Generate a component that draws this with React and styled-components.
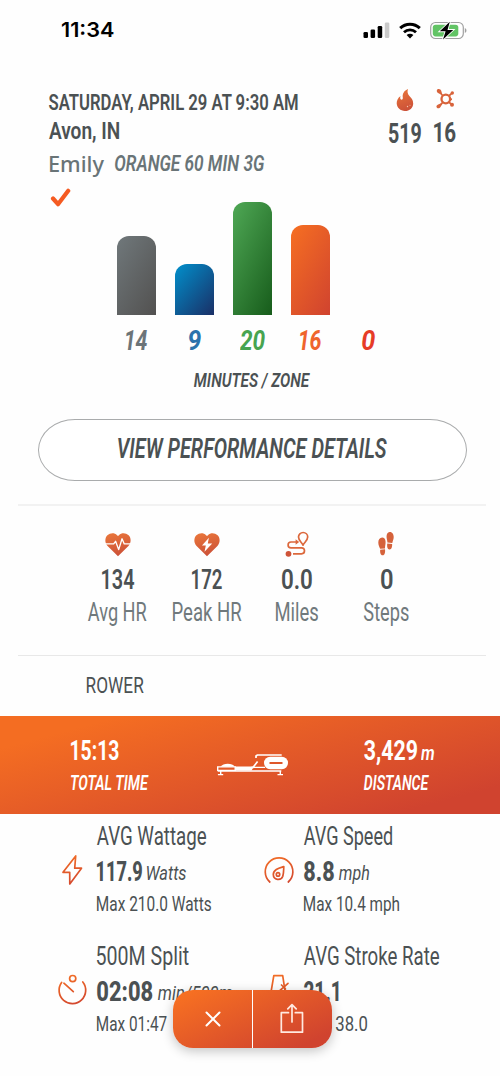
import React, { useLayoutEffect, useRef } from 'react';
import styled, { createGlobalStyle } from 'styled-components';

const GlobalStyle = createGlobalStyle`
  * {
    box-sizing: border-box;
  }

  body {
    margin: 0;
    background: #fefefe;
    font-family: Roboto, 'Liberation Sans', sans-serif;
    color: #4b5153;
  }
`;

// Condensed label: squeezes the text so that its ink fills the given width
const Condensed = ({ width, children, ...rest }) => {
  const ref = useRef(null);

  useLayoutEffect(() => {
    const el = ref.current;
    const css = getComputedStyle(el);
    const ctx = document.createElement('canvas').getContext('2d');
    // measured at 10x, the ink box is rounded to whole pixels
    ctx.font = `${css.fontStyle} ${css.fontWeight} ${parseFloat(css.fontSize) * 10}px ${css.fontFamily}`;
    const m = ctx.measureText(el.textContent);
    const left = m.actualBoundingBoxLeft / 10;
    const right = m.actualBoundingBoxRight / 10;
    // the laid out advance can differ a little from the ideal one
    const advance = el.offsetWidth ? el.getBoundingClientRect().width : 0;
    const fix = el.style.transform || !advance ? 1 : advance / (m.width / 10);
    const scale = width / ((left + right) * fix);
    el.style.transform = `translateX(${left * scale}px) scaleX(${scale})`;
  }, [width, children]);

  return (
    <Label $width={width} {...rest}>
      <span ref={ref}>{children}</span>
    </Label>
  );
};

const Label = styled.div`
  flex: none;
  width: ${(p) => p.$width}px;
  height: ${(p) => p.$line || 30}px;
  line-height: ${(p) => p.$line || 30}px;
  font-family: ${(p) => p.$font || 'inherit'};
  font-size: ${(p) => p.$size}px;
  font-weight: ${(p) => p.$weight || 400};
  font-style: ${(p) => (p.$italic ? 'italic' : 'normal')};
  color: ${(p) => p.$color || 'inherit'};
  white-space: nowrap;

  span {
    display: inline-block;
    transform-origin: 0 50%;
  }
`;

const Screen = styled.div`
  position: relative;
  width: 500px;
  height: 1076px;
  overflow: hidden;
  background: #fefefe;
`;

const StatusBar = styled.div`
  display: flex;
  align-items: center;
  justify-content: space-between;
  height: 60px;
  padding: 0 33px 0 61.5px;
  font-family: Inter, sans-serif;
  color: #000;

  svg {
    display: block;
  }
`;

const StatusIcons = styled.div`
  display: flex;
  align-items: center;
  gap: 9px;
`;

const Header = styled.div`
  display: flex;
  justify-content: space-between;
  height: 142px;
  padding: 28px 44.5px 0 49px;
`;

const CoachLine = styled.div`
  display: flex;
  gap: 11px;
  padding-left: 1px;
`;

const CheckIcon = styled.svg`
  display: block;
  margin: 7px 0 0 1px;
`;

const Totals = styled.div`
  display: flex;
  gap: 13px;
`;

const Total = styled.div`
  display: flex;
  flex-direction: column;
  align-items: center;

  svg {
    display: block;
    height: 24px;
    margin-bottom: ${(p) => p.$gap}px;
  }
`;

const Zones = styled.div`
  display: grid;
  grid-template-columns: repeat(5, 39px);
  column-gap: 19px;
  justify-items: center;
  align-items: end;
  padding-left: 117px;
`;

const Bar = styled.div`
  width: 39px;
  border-radius: 12px 12px 0 0;
  background: linear-gradient(${(p) => p.$angle}deg, ${(p) => p.$from}, ${(p) => p.$to});
`;

const BarSlot = styled.div`
  display: flex;
  align-items: flex-end;
  height: 113px;
`;

const ZoneCaption = styled.div`
  display: flex;
  padding-left: 194px;
`;

const DetailsButton = styled.button`
  display: flex;
  align-items: center;
  justify-content: center;
  width: 429px;
  height: 62px;
  margin: 26px 0 23px 38px;
  padding: 0 0 2px;
  border: 1px solid #a9abac;
  border-radius: 37px / 31px;
  background: #fff;
  font-family: inherit;
  color: inherit;
`;

const Divider = styled.div`
  height: ${(p) => p.$thick}px;
  margin: 0 14px 0 18px;
  background: ${(p) => p.$tone};
`;

const Stats = styled.div`
  display: grid;
  grid-template-columns: repeat(4, 89.6px);
  height: 149px;
  padding: 25px 0 0 72.8px;
`;

const Stat = styled.div`
  display: flex;
  flex-direction: column;
  align-items: center;

  svg {
    display: block;
    height: 27px;
  }
`;

const SectionTitle = styled.div`
  height: 60px;
  padding-left: 87px;
`;

const Banner = styled.div`
  display: flex;
  height: 98px;
  padding: 20px 66px 0 71px;
  background: linear-gradient(165deg, #f46d22 14%, #d0432f 88%);
  color: #fff;
  justify-content: space-between;

  svg {
    display: block;
    margin-top: 17.5px;
    margin-left: -7px;
  }
`;

const ValueRow = styled.div`
  display: flex;
  height: ${(p) => p.$height}px;
  gap: ${(p) => p.$gap || 4}px;
`;

const Metrics = styled.div`
  display: grid;
  grid-template-columns: repeat(2, 206.5px);
  grid-auto-rows: 119.5px;
  padding: 6px 0 0 57px;
`;

const Metric = styled.div`
  display: flex;
  gap: 10px;
`;

const MetricIcon = styled.div`
  width: 30px;
  padding-top: 34px;

  svg {
    display: block;
  }
`;

const Dock = styled.div`
  position: absolute;
  left: 173px;
  top: 989.5px;
  display: grid;
  grid-template-columns: 79px 79.5px;
  width: 158.5px;
  height: 58px;
  border-radius: 20px;
  background: linear-gradient(155deg, #f66f22 8%, #d0432f 88%);
  box-shadow: 0 3px 12px rgba(0, 0, 0, 0.24);
`;

const DockButton = styled.button`
  display: flex;
  align-items: center;
  justify-content: center;
  padding: 0;
  border: none;
  background: none;

  & + & {
    border-left: 1px solid #fff;
  }
`;

const Defs = () => (
  <svg width="0" height="0" style={{ position: 'absolute' }}>
    <defs>
      <linearGradient id="ember" x1="0.3" y1="0" x2="0.6" y2="1">
        <stop offset="0" stopColor="#e8743a" />
        <stop offset="1" stopColor="#cb5038" />
      </linearGradient>
      <linearGradient id="line" gradientUnits="userSpaceOnUse" x1="8" y1="0" x2="20" y2="32">
        <stop offset="0" stopColor="#f47025" />
        <stop offset="1" stopColor="#d1452f" />
      </linearGradient>
    </defs>
  </svg>
);

const Flame = () => (
  <svg width="18" height="24" viewBox="0 0 18 24">
    <path
      fill="url(#ember)"
      d="M12 .9C8.2 2.4 6.2 5.6 6.8 9.4c.3 2-1.4 3-2.3 1.6C4 10.2 4.2 9 4.6 8 1.8 9.8.6 12.7.7 15.6 1 20 4.4 23 8.9 23c4.8 0 8.3-3.3 8.3-7.6 0-3.6-2-5.4-3.8-7.4C11.700 6 11 3.600 12 .9Z"
    />
    <circle cx="11.5" cy="18.5" r=".7" fill="#f5c6ad" />
    <circle cx="14" cy="17.2" r=".5" fill="#f5c6ad" />
  </svg>
);

const Splat = () => (
  <svg width="20" height="24" viewBox="0 0 20 24">
    <g fill="none" stroke="#d8633b">
      <circle cx="10.8" cy="11" r="4.3" strokeWidth="2.3" />
      <path d="M5 4.5 8 8M13.800 8l2.600-2.400M8 14l-3.300 3.800M13.800 14l2.400 2.200M15 11.100l2 .2" strokeWidth="1.8" />
    </g>
    <g fill="#d8633b">
      <path d="M2.500 1.300C4 .5 5.900 1.300 6.400 3.200l.8 3.600L4 5.500C1.700 4.800 1.100 2.300 2.500 1.300Z" />
      <path d="M1.800 17.600c.8-1.200 3.900-2.200 5.600-2.400l-1.800 3.500c-.8 1.600-2.700 2-3.700 1-.6-.6-.6-1.400-.1-2.100Z" />
      <circle cx="17.300" cy="5" r="1.700" />
      <circle cx="17" cy="16.800" r="2" />
    </g>
  </svg>
);

const HEART =
  'M14 26.2 3.2 15.5C.1 12.4.2 7.2 3 4.5 6 1.7 10.4 1.7 13 4.3l1 1 1-1c2.6-2.6 7-2.6 10 .2 2.8 2.7 2.9 7.9-.2 11Z';

const HeartPulse = () => (
  <svg width="28" height="27" viewBox="0 0 28 28">
    <path fill="url(#ember)" d={HEART} />
    <path
      d="M1 13.4h8.5l2-2.7 3.2 8.6 3.5-11.2 2.3 5.3H27"
      fill="none"
      stroke="#fff"
      strokeWidth="1.4"
      strokeLinejoin="round"
    />
  </svg>
);

const HeartBolt = () => (
  <svg width="28" height="27" viewBox="0 0 28 28">
    <path fill="url(#ember)" d={HEART} />
    <path d="M16 7 8.8 15h4l-1.4 6.5 8-8.6h-4.6Z" fill="#fff" />
  </svg>
);

const Route = () => (
  <svg width="26" height="27" viewBox="0 0 26 27">
    <g fill="none" stroke="#dc683c" strokeWidth="1.7">
      <path d="M19 14.2c-1-2.700-4.500-4.600-4.500-8.100a4.600 4.600 0 0 1 9.200 0c0 3.500-3.700 5.400-4.700 8.100Z" strokeLinejoin="round" />
      <path d="M12 11H7a2.900 2.900 0 0 0 0 5.800h10.500a2.900 2.900 0 0 1 0 6H9" />
    </g>
    <path d="M11.600 8.200 15.200 11l-3.600 2.800Z" fill="#dc683c" />
    <circle cx="4.500" cy="22.800" r="2.900" fill="#cf5338" />
  </svg>
);

const Footprints = () => (
  <svg width="20" height="27" viewBox="0 0 20 27">
    <g fill="#d5623b">
      <path d="M6.300 6.500c2.800.1 3.700 3.200 3.200 6.300-.2 1.500-.5 2.700-.5 4.600l-4.900.4C3.300 15.800 2.300 14 2.300 11.600c0-2.900 1.500-5.200 4-5.100Z" />
      <path d="m4.200 18.700 4.800-.5c.4 2.900-.2 6-2.300 6.100-2.100.1-2.800-2.900-2.500-5.600Z" />
      <path d="M13.600 1.100c2.600-.3 4.100 2.300 4.100 5 0 2.300-1 4-1.400 6l-4.900-.6c0-1.700-.5-2.800-.7-4.300-.4-2.900.3-5.800 2.900-6.100Z" />
      <path d="m11.300 12.400 4.800.6c.3 2.700-.6 5.600-2.600 5.400-2.200-.2-2.700-3.100-2.200-6Z" />
    </g>
  </svg>
);

const Rower = () => (
  <svg width="72" height="22" viewBox="0 0 72 22">
    <path d="M3.500 12.800c2.500-4.200 12-4.200 14.500 0Z" fill="#fff" />
    <path d="M18 12.500h19l-2.500 4H18Z" fill="#fff" />
    <g fill="none" stroke="#fff" strokeWidth="1.400">
      <path d="M.7 12.900h17.500v3.500H.7ZM34 13.400h14M.7 17h63.600" />
      <path d="M35.500 14 40.600 7.500M39 4V2l1.300-1H64.700" strokeWidth="1.700" />
      <path d="M3.700 17v3.500M.9 20.600h5.300M63.300 17v3.500M60.500 20.600h5.500" />
    </g>
    <rect x="47" y="2.800" width="24" height="12.400" rx="6.200" fill="#fff" />
    <path d="M52.500 9h13" stroke="#df572a" strokeWidth="2" />
  </svg>
);

const Bolt = () => (
  <svg width="30" height="34" viewBox="0 0 30 34">
    <path
      d="M18.700 1.900 6 18.300h6.700L12.800 30 24.500 14.200h-6.800Z"
      fill="none"
      stroke="url(#line)"
      strokeWidth="1.700"
      strokeLinejoin="round"
    />
  </svg>
);

const Gauge = () => (
  <svg width="30" height="34" viewBox="0 0 30 34">
    <g fill="none" stroke="url(#line)" strokeWidth="1.700" strokeLinecap="round">
      <path d="M5.800 28A13.800 13.800 0 1 1 24.300 28" />
      <path d="M19.800 12.600c-5 1.600-10.500 3-10.500 8a4.900 4.900 0 0 0 9.500 1.600c1-3 .8-6.300 1-9.600Z" strokeLinejoin="round" />
      <circle cx="14" cy="20.400" r="1.700" />
    </g>
  </svg>
);

const Timer = () => (
  <svg width="30" height="34" viewBox="0 0 30 34">
    <g fill="none" stroke="url(#line)" strokeWidth="1.700" strokeLinecap="round">
      <path d="M4.600 8.500a13.300 13.300 0 1 0 21.200-.5" />
      <circle cx="15.700" cy="4.600" r="3.100" />
      <path d="m6.900 9.200 9.400 8.400" />
    </g>
  </svg>
);

const Metronome = () => (
  <svg width="30" height="34" viewBox="0 0 30 34">
    <g fill="none" stroke="url(#line)" strokeWidth="1.700" strokeLinecap="round" strokeLinejoin="round">
      <path d="M9.800 1.700h8.900L23 30H5Z" />
      <path d="M24 9.300 12 20M17.500 11l4 4" />
    </g>
  </svg>
);

const zones = [
  { minutes: '14', height: 79, width: 21, angle: 120, from: '#70787b', to: '#525150', color: '#6c7478' },
  { minutes: '9', height: 51, width: 12, angle: 130, from: '#0190cc', to: '#1a2f66', color: '#2b72ac' },
  { minutes: '20', height: 113, width: 25, angle: 115, from: '#4fa855', to: '#175c1b', color: '#47a450' },
  { minutes: '16', height: 90, width: 21, angle: 120, from: '#f66f22', to: '#d0432f', color: '#ef642c' },
  { minutes: '0', height: 0, width: 13, angle: 120, from: '#e8432d', to: '#e8432d', color: '#e63c27' },
];

const stats = [
  { icon: <HeartPulse />, value: '134', valueWidth: 32, name: 'Avg HR', nameWidth: 58.5 },
  { icon: <HeartBolt />, value: '172', valueWidth: 30, name: 'Peak HR', nameWidth: 68.5 },
  { icon: <Route />, value: '0.0', valueWidth: 30, name: 'Miles', nameWidth: 42 },
  { icon: <Footprints />, value: '0', valueWidth: 11.5, name: 'Steps', nameWidth: 44.5 },
];

const metrics = [
  { icon: <Bolt />, title: ['AVG Wattage', 109], value: ['117.9', 45], unit: ['Watts', 39], max: ['Max 210.0 Watts', 114] },
  { icon: <Gauge />, title: ['AVG Speed', 88], value: ['8.8', 30], unit: ['mph', 30], max: ['Max 10.4 mph', 95] },
  { icon: <Timer />, title: ['500M Split', 91.5], value: ['02:08', 55.5], unit: ['min/500m', 74], max: ['Max 01:47', 69.5] },
  { icon: <Metronome />, title: ['AVG Stroke Rate', 135], value: ['21.1', 34.5], max: ['Max', 27, '38.0', 31] },
];

const App = () => (
  <Screen>
    <GlobalStyle />
    <Defs />

    <StatusBar>
      <Condensed width={51.5} $size={20.3} $weight={560} $line={30}>11:34</Condensed>
      <StatusIcons>
        <svg width="27" height="18" viewBox="0 0 27 18">
          <rect x="0.5" y="11" width="4.5" height="6" rx="1.3" />
          <rect x="7.600" y="8.500" width="4.500" height="8.500" rx="1.300" />
          <rect x="14.700" y="5" width="4.500" height="12" rx="1.300" />
          <rect x="21.800" y="1.500" width="4.500" height="15.500" rx="1.300" fill="#cacaca" />
        </svg>
        <svg width="22" height="17" viewBox="0 0 22 17">
          <g fill="none" stroke="#000" strokeWidth="3">
            <path d="M1.2 6.2a14.2 14.2 0 0 1 19.6 0" />
            <path d="M5 10.2a8.7 8.7 0 0 1 12 0" strokeWidth="2.8" />
          </g>
          <path d="M7.6 13a4.9 4.9 0 0 1 6.8 0L11 16.5Z" />
        </svg>
        <svg width="37" height="19" viewBox="0 0 37 19">
          <rect x="0.7" y="1.5" width="32.6" height="16" rx="4.8" fill="#fff" stroke="#a0a0a0" strokeWidth="1.2" />
          <rect x="2.8" y="3.7" width="25.5" height="11.7" rx="2.8" fill="#62c465" />
          <path d="M34.8 7v5c2.2-.8 2.2-4.2 0-5Z" fill="#a0a0a0" />
          <path d="M19.800.8 9.800 10.300h5.800L13 18.400l10.200-9.500h-5.700Z" stroke="#fff" strokeWidth="1.800" paintOrder="stroke" />
        </svg>
      </StatusIcons>
    </StatusBar>

    <Header>
      <div>
        <Condensed width={248.5} $size={22.3} $weight={600} $line={28}>SATURDAY, APRIL 29 AT 9:30 AM</Condensed>
        <Condensed width={70} $size={24} $weight={600} $line={31}>Avon, IN</Condensed>
        <CoachLine>
          <Condensed width={54} $size={22.3} $weight={500} $line={34} $font="'Noto Sans', sans-serif" $color="#697477">Emily</Condensed>
          <Condensed width={149} $size={22.3} $weight={600} $line={33} $italic $color="#697477">ORANGE 60 MIN 3G</Condensed>
        </CoachLine>
        <CheckIcon width="21" height="20" viewBox="0 0 21 20">
          <path d="m3 10.5 5 5.7L18.2 2.8" fill="none" stroke="#f55b22" strokeWidth="4.2" strokeLinecap="round" strokeLinejoin="round" />
        </CheckIcon>
      </div>
      <Totals>
        <Total $gap={7}>
          <Flame />
          <Condensed width={32} $size={27} $weight={700}>519</Condensed>
        </Total>
        <Total $gap={6}>
          <Splat />
          <Condensed width={21.5} $size={27} $weight={700}>16</Condensed>
        </Total>
      </Totals>
    </Header>

    <Zones>
      {zones.map((z) => (
        <BarSlot key={z.minutes}>
          <Bar style={{ height: z.height }} $angle={z.angle} $from={z.from} $to={z.to} />
        </BarSlot>
      ))}
      {zones.map((z) => (
        <Condensed key={z.minutes} width={z.width} $size={26.8} $weight={700} $line={53} $italic $color={z.color}>
          {z.minutes}
        </Condensed>
      ))}
    </Zones>
    <ZoneCaption>
      <Condensed width={116} $size={19.6} $weight={600} $line={25} $italic>MINUTES / ZONE</Condensed>
    </ZoneCaption>

    <DetailsButton>
      <Condensed width={269} $size={27} $weight={600} $italic>VIEW PERFORMANCE DETAILS</Condensed>
    </DetailsButton>

    <Divider $thick={2} $tone="#f2f2f2" />
    <Stats>
      {stats.map((s) => (
        <Stat key={s.name}>
          {s.icon}
          <Condensed width={s.valueWidth} $size={26.8} $weight={600} $line={45}>{s.value}</Condensed>
          <Condensed width={s.nameWidth} $size={25} $weight={400} $line={20} $color="#70797c">{s.name}</Condensed>
        </Stat>
      ))}
    </Stats>
    <Divider $thick={1} $tone="#e8e8e8" />

    <SectionTitle>
      <Condensed width={56.5} $size={22.3} $weight={400} $line={58}>ROWER</Condensed>
    </SectionTitle>

    <Banner>
      <div>
        <Condensed width={47.5} $size={26.8} $weight={700} $line={31}>15:13</Condensed>
        <Condensed width={77.5} $size={20.2} $weight={600} $line={32} $italic>TOTAL TIME</Condensed>
      </div>
      <Rower />
      <div>
        <ValueRow $height={31}>
          <Condensed width={53} $size={26.8} $weight={700} $line={31}>3,429</Condensed>
          <Condensed width={13} $size={20} $weight={600} $line={35} $italic>m</Condensed>
        </ValueRow>
        <Condensed width={65} $size={20.2} $weight={600} $line={32} $italic>DISTANCE</Condensed>
      </div>
    </Banner>

    <Metrics>
      {metrics.map((m) => (
        <Metric key={m.title[0]}>
          <MetricIcon>{m.icon}</MetricIcon>
          <div>
            <Condensed width={m.title[1]} $size={25} $line={34}>{m.title[0]}</Condensed>
            <ValueRow $gap={5} $height={36}>
              <Condensed width={m.value[1]} $size={27} $weight={800} $line={36}>{m.value[0]}</Condensed>
              {m.unit && <Condensed width={m.unit[1]} $size={20} $line={38} $italic>{m.unit[0]}</Condensed>}
            </ValueRow>
            <ValueRow $gap={5.5} $height={29}>
              <Condensed width={m.max[1]} $size={20.2} $line={29}>{m.max[0]}</Condensed>
              {m.max[2] && <Condensed width={m.max[3]} $size={20.2} $line={29}>{m.max[2]}</Condensed>}
            </ValueRow>
          </div>
        </Metric>
      ))}
    </Metrics>

    <Dock>
      <DockButton aria-label="Close">
        <svg width="16" height="16" viewBox="0 0 16 16">
          <path d="m1.5 1.5 13 13m0-13-13 13" stroke="#fff" strokeWidth="2" strokeLinecap="round" />
        </svg>
      </DockButton>
      <DockButton aria-label="Share">
        <svg width="24" height="31" viewBox="0 0 24 31">
          <path
            d="M8.5 9.7H1.3v19.5h21.2V9.7h-7.2M12 19V2M7.8 5.8 12 1.7l4.2 4.1"
            fill="none"
            stroke="#ffe9e0"
            strokeWidth="1.7"
            strokeLinecap="round"
            strokeLinejoin="round"
          />
        </svg>
      </DockButton>
    </Dock>
  </Screen>
);

export default App;
